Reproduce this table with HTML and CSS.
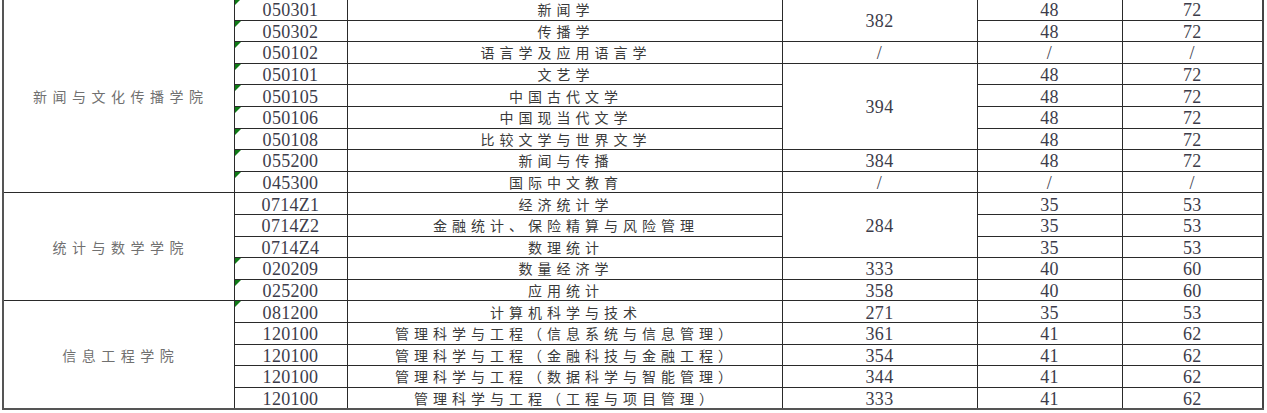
FILE: index.html
```html
<!DOCTYPE html>
<html lang="zh">
<head>
<meta charset="utf-8">
<link rel="stylesheet" href="styles.css">
</head>
<body>
<table class="grid">
<colgroup>
<col class="c1"><col class="c2"><col class="c3"><col class="c4"><col class="c5"><col class="c6">
</colgroup>
<tbody>
<tr><td class="col" rowspan="9">新闻与文化传播学院</td><td class="num t">050301</td><td class="zh">新闻学</td><td class="num" rowspan="2">382</td><td class="num">48</td><td class="num">72</td></tr>
<tr><td class="num t">050302</td><td class="zh">传播学</td><td class="num">48</td><td class="num">72</td></tr>
<tr><td class="num t">050102</td><td class="zh">语言学及应用语言学</td><td class="num">/</td><td class="num">/</td><td class="num">/</td></tr>
<tr><td class="num t">050101</td><td class="zh">文艺学</td><td class="num" rowspan="4">394</td><td class="num">48</td><td class="num">72</td></tr>
<tr><td class="num t">050105</td><td class="zh">中国古代文学</td><td class="num">48</td><td class="num">72</td></tr>
<tr><td class="num t">050106</td><td class="zh">中国现当代文学</td><td class="num">48</td><td class="num">72</td></tr>
<tr><td class="num t">050108</td><td class="zh">比较文学与世界文学</td><td class="num">48</td><td class="num">72</td></tr>
<tr><td class="num t">055200</td><td class="zh">新闻与传播</td><td class="num">384</td><td class="num">48</td><td class="num">72</td></tr>
<tr><td class="num t">045300</td><td class="zh">国际中文教育</td><td class="num">/</td><td class="num">/</td><td class="num">/</td></tr>
<tr><td class="col" rowspan="5">统计与数学学院</td><td class="num">0714Z1</td><td class="zh">经济统计学</td><td class="num" rowspan="3">284</td><td class="num">35</td><td class="num">53</td></tr>
<tr><td class="num">0714Z2</td><td class="zh">金融统计、保险精算与风险管理</td><td class="num">35</td><td class="num">53</td></tr>
<tr><td class="num">0714Z4</td><td class="zh">数理统计</td><td class="num">35</td><td class="num">53</td></tr>
<tr><td class="num t">020209</td><td class="zh">数量经济学</td><td class="num">333</td><td class="num">40</td><td class="num">60</td></tr>
<tr><td class="num t">025200</td><td class="zh">应用统计</td><td class="num">358</td><td class="num">40</td><td class="num">60</td></tr>
<tr><td class="col" rowspan="5">信息工程学院</td><td class="num t">081200</td><td class="zh">计算机科学与技术</td><td class="num">271</td><td class="num">35</td><td class="num">53</td></tr>
<tr><td class="num">120100</td><td class="zh">管理科学与工程（信息系统与信息管理）</td><td class="num">361</td><td class="num">41</td><td class="num">62</td></tr>
<tr><td class="num">120100</td><td class="zh">管理科学与工程（金融科技与金融工程）</td><td class="num">354</td><td class="num">41</td><td class="num">62</td></tr>
<tr><td class="num">120100</td><td class="zh">管理科学与工程（数据科学与智能管理）</td><td class="num">344</td><td class="num">41</td><td class="num">62</td></tr>
<tr><td class="num">120100</td><td class="zh">管理科学与工程（工程与项目管理）</td><td class="num">333</td><td class="num">41</td><td class="num">62</td></tr>
</tbody>
</table>
</body>
</html>
```
FILE: styles.css
```css
html, body {
  margin: 0;
  padding: 0;
  background: #ffffff;
}

.grid {
  margin: -2px 0 0 2px;
  border-collapse: collapse;
  table-layout: fixed;
  width: 1260px;
  border-left: 2px solid #555;
  border-right: 2px solid #444;
  border-bottom: 2px solid #555;
}

.c1 { width: 231px; }
.c2 { width: 113px; }
.c3 { width: 435px; }
.c4 { width: 195px; }
.c5 { width: 145px; }
.c6 { width: 141px; }

.grid tr {
  height: 21.6px;
}

.grid td {
  border: 1px solid #2a2a2a;
  padding: 0;
  text-align: center;
  vertical-align: middle;
  line-height: 1;
  overflow: hidden;
  white-space: nowrap;
}

.num {
  font-family: "Liberation Serif", "DejaVu Serif", serif;
  font-size: 18px;
  color: #3c3c4a;
  padding-top: 2px !important;
  letter-spacing: 0.3px;
}

.zh {
  font-family: "Noto Sans CJK SC", "Noto Sans", sans-serif;
  font-size: 14px;
  letter-spacing: 5px;
  color: #3a3a3a;
  font-weight: 400;
  padding-left: 3px !important;
}

.col {
  font-family: "Noto Sans CJK SC", "Noto Sans", sans-serif;
  font-size: 14px;
  letter-spacing: 5.5px;
  color: #707070;
  font-weight: 400;
  padding-left: 4px !important;
  border-left: 2px solid #555 !important;
}

.t {
  position: relative;
}

.t::before {
  content: "";
  position: absolute;
  left: 0;
  top: 0;
  width: 0;
  height: 0;
  border-top: 6px solid #0f7a16;
  border-right: 6px solid transparent;
}
```
